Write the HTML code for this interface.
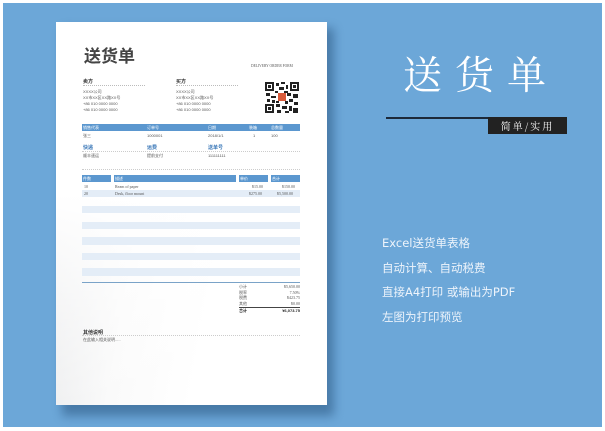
<!DOCTYPE html>
<html><head><meta charset="utf-8"><style>
*{margin:0;padding:0;box-sizing:border-box}
body{width:605px;height:431px;background:#fff;position:relative;overflow:hidden;font-family:"Liberation Sans","Noto Sans CJK SC",sans-serif}
.a{position:absolute;white-space:nowrap}
#bg{left:3px;top:3px;width:599px;height:424px;background:#6ca7d8}
#shadow{left:62px;top:28px;width:272px;height:388px;background:#3f6f9c;filter:blur(5px);opacity:.8}
#paper{left:56px;top:22px;width:271px;height:383px;background:linear-gradient(100deg,#e2e3e5 0%,#fafafa 35%,#fff 60%);}
#paper2{left:56px;top:22px;width:271px;height:383px;background:linear-gradient(180deg,#fff 45%,rgba(255,255,255,0) 100%)}
.s{font-size:4px;color:#555;transform-origin:0 0}
.bar{background:#5b97cf}
.lr{background:#e4edf7}
.w{color:#fff}
</style></head><body>
<div class="a" id="bg"></div>
<div class="a" id="shadow"></div>
<div class="a" id="paper"></div>
<div class="a" id="paper2"></div>

<div class="a" style="left:84px;top:45px;font-size:17px;font-weight:bold;color:#444;font-family:'Noto Sans CJK SC',sans-serif;line-height:20px">送货单</div>
<div class="a" style="left:251px;top:64px;font-size:3.6px;color:#555;font-family:'Liberation Serif',serif">DELIVERY ORDER FORM</div>

<div class="a" style="left:83px;top:78px;font-size:5px;font-weight:bold;color:#333">卖方</div>
<div class="a" style="left:83px;top:85px;width:62px;border-top:1px dotted #bbb"></div>
<div class="a s" style="left:83px;top:89px;line-height:6px">XXXX公司<br>XX市XX区XX路XX号<br>+86 010 0000 0000<br>+86 010 0000 0000</div>
<div class="a" style="left:176px;top:78px;font-size:5px;font-weight:bold;color:#333">买方</div>
<div class="a" style="left:176px;top:85px;width:62px;border-top:1px dotted #bbb"></div>
<div class="a s" style="left:176px;top:89px;line-height:6px">XXXX公司<br>XX市XX区XX路XX号<br>+86 010 0000 0000<br>+86 010 0000 0000</div>

<svg class="a" style="left:265px;top:82px" width="34" height="31" viewBox="0 0 34 31">
<rect width="34" height="31" fill="#fff"/>
<g fill="#222">
<rect x="0" y="0" width="9" height="9"/><rect x="25" y="0" width="9" height="9"/><rect x="0" y="22" width="9" height="9"/>
<rect x="11" y="1" width="3" height="3"/><rect x="16" y="0" width="4" height="2"/><rect x="14" y="5" width="5" height="3"/><rect x="21" y="3" width="2" height="4"/><rect x="10" y="9" width="3" height="2"/><rect x="19" y="9" width="4" height="2"/>
<rect x="1" y="11" width="4" height="3"/><rect x="6" y="14" width="5" height="2"/><rect x="2" y="17" width="3" height="3"/><rect x="7" y="18" width="3" height="3"/><rect x="22" y="11" width="4" height="3"/><rect x="28" y="12" width="5" height="4"/><rect x="24" y="17" width="4" height="3"/><rect x="29" y="20" width="4" height="3"/><rect x="11" y="19" width="3" height="2"/><rect x="20" y="19" width="3" height="3"/>
<rect x="11" y="22" width="4" height="3"/><rect x="17" y="24" width="5" height="3"/><rect x="24" y="24" width="3" height="5"/><rect x="12" y="28" width="4" height="3"/><rect x="28" y="26" width="5" height="5"/><rect x="20" y="29" width="4" height="2"/>
</g>
<g fill="#fff"><rect x="2" y="2" width="5" height="5"/><rect x="27" y="2" width="5" height="5"/><rect x="2" y="24" width="5" height="5"/></g>
<g fill="#222"><rect x="3" y="3" width="3" height="3"/><rect x="28" y="3" width="3" height="3"/><rect x="3" y="25" width="3" height="3"/></g>
<rect x="13" y="11" width="8" height="8" fill="#d85a3a"/>
</svg>

<div class="a bar" style="left:82px;top:124px;width:218px;height:7px"></div>
<div class="a s w" style="left:83px;top:125px">销售代表</div>
<div class="a s w" style="left:147px;top:125px">订单号</div>
<div class="a s w" style="left:208px;top:125px">日期</div>
<div class="a s w" style="left:249px;top:125px">装箱</div>
<div class="a s w" style="left:271px;top:125px">总数量</div>
<div class="a s" style="left:83px;top:133px">张三</div>
<div class="a s" style="left:147px;top:133px">1000001</div>
<div class="a s" style="left:208px;top:133px">2018/1/1</div>
<div class="a s" style="left:253px;top:133px">1</div>
<div class="a s" style="left:271px;top:133px">100</div>
<div class="a" style="left:83px;top:144px;font-size:5px;font-weight:bold;color:#3b78b8">快递</div>
<div class="a" style="left:147px;top:144px;font-size:5px;font-weight:bold;color:#3b78b8">运费</div>
<div class="a" style="left:208px;top:144px;font-size:5px;font-weight:bold;color:#3b78b8">送单号</div>
<div class="a" style="left:82px;top:151px;width:218px;border-top:1px dotted #ccc"></div>
<div class="a s" style="left:83px;top:153px">顺丰速运</div>
<div class="a s" style="left:147px;top:153px">提前支付</div>
<div class="a s" style="left:208px;top:153px">111111111</div>
<div class="a" style="left:82px;top:169px;width:218px;border-top:1px dotted #ccc"></div>

<div class="a bar" style="left:82px;top:175px;width:29px;height:7px"></div>
<div class="a bar" style="left:114px;top:175px;width:122px;height:7px"></div>
<div class="a bar" style="left:239px;top:175px;width:29px;height:7px"></div>
<div class="a bar" style="left:271px;top:175px;width:29px;height:7px"></div>
<div class="a s w" style="left:83px;top:176px">件数</div>
<div class="a s w" style="left:115px;top:176px">描述</div>
<div class="a s w" style="left:240px;top:176px">单价</div>
<div class="a s w" style="left:272px;top:176px">合计</div>
<div class="a s" style="left:84px;top:184px;font-family:'Liberation Serif',serif">10</div>
<div class="a s" style="left:115px;top:184px;font-family:'Liberation Serif',serif">Ream of paper</div>
<div class="a s" style="left:252px;top:184px;font-family:'Liberation Serif',serif">¥15.00</div>
<div class="a s" style="left:282px;top:184px;font-family:'Liberation Serif',serif">¥150.00</div>
<div class="a lr" style="left:82px;top:190px;width:218px;height:7px"></div>
<div class="a s" style="left:84px;top:191px;font-family:'Liberation Serif',serif">20</div>
<div class="a s" style="left:115px;top:191px;font-family:'Liberation Serif',serif">Desk, floor mount</div>
<div class="a s" style="left:249px;top:191px;font-family:'Liberation Serif',serif">¥275.00</div>
<div class="a s" style="left:277px;top:191px;font-family:'Liberation Serif',serif">¥5,500.00</div>

<div class="a lr" style="left:82px;top:206px;width:218px;height:7px"></div>
<div class="a lr" style="left:82px;top:222px;width:218px;height:7px"></div>
<div class="a lr" style="left:82px;top:237px;width:218px;height:8px"></div>
<div class="a lr" style="left:82px;top:253px;width:218px;height:7px"></div>
<div class="a lr" style="left:82px;top:268px;width:218px;height:8px"></div>
<div class="a" style="left:82px;top:282px;width:218px;border-top:1px solid #7aa3c8"></div>

<div class="a s" style="left:239px;top:284px;line-height:5.6px">小计<br>税率<br>税费<br>其他</div>
<div class="a s" style="left:260px;top:284px;width:40px;text-align:right;line-height:5.6px;font-family:'Liberation Serif',serif">¥5,650.00<br>7.50%<br>¥423.75<br>¥0.00</div>
<div class="a" style="left:239px;top:307px;width:61px;border-top:1px solid #444"></div>
<div class="a s" style="left:239px;top:308px;font-weight:bold;color:#222">合计</div>
<div class="a s" style="left:260px;top:308px;width:40px;text-align:right;font-weight:bold;color:#222">¥6,073.75</div>

<div class="a" style="left:83px;top:329px;font-size:5px;font-weight:bold;color:#333">其他说明</div>
<div class="a" style="left:82px;top:335px;width:218px;border-top:1px dotted #ccc"></div>
<div class="a s" style="left:83px;top:337px">在此输入相关说明.....</div>

<div class="a" style="left:403px;top:47px;font-size:39px;color:#fff;letter-spacing:13px;font-family:'Noto Serif CJK SC',serif;line-height:52px">送货单</div>
<div class="a" style="left:386px;top:117px;width:104px;height:2px;background:#1d2a3a"></div>
<div class="a" style="left:488px;top:117px;width:79px;height:17px;background:#222;color:#fff;font-size:10px;text-align:center;line-height:17px;letter-spacing:2px;font-family:'Noto Serif CJK SC',serif">简单/实用</div>

<div class="a" style="left:382px;top:231px;font-size:11.5px;color:#eef4fb;line-height:24.7px;font-family:'DejaVu Sans','Noto Sans CJK SC',sans-serif">Excel送货单表格<br>自动计算、自动税费<br>直接A4打印 或输出为PDF<br>左图为打印预览</div>
</body></html>
